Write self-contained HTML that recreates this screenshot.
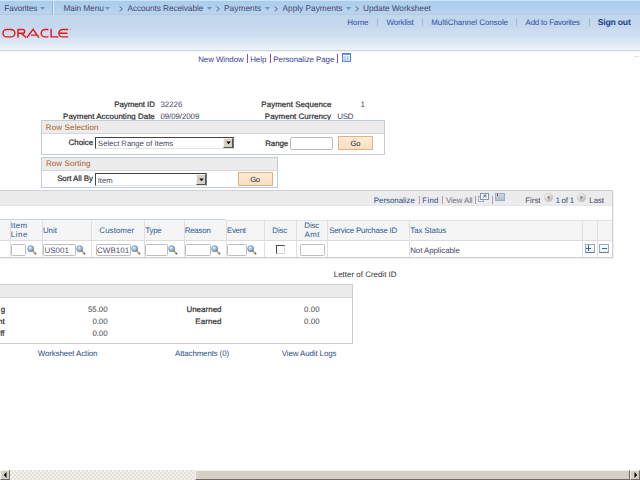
<!DOCTYPE html><html><head><meta charset="utf-8"><style>
html,body{margin:0;padding:0;width:640px;height:480px;overflow:hidden;background:#fff}
body{position:relative;font-family:"Liberation Sans",sans-serif}
.t{position:absolute;white-space:nowrap;line-height:1;font-family:"Liberation Sans",sans-serif;text-rendering:geometricPrecision}
.a{position:absolute}
</style></head><body>
<div class="a" style="left:0px;top:0px;width:640px;height:1px;background:#d3e2f1"></div>
<div class="a" style="left:0px;top:1px;width:640px;height:14px;background:linear-gradient(#aacdef,#bad3ec 13px,#b3cbe5 13px)"></div>
<div class="a" style="left:0px;top:15px;width:640px;height:35px;background:linear-gradient(#c2d6ec 0px,#c5d8ee 13px,#cadcef 14px,#d0e0f1 22px,#d8e5f4 24px,#dde8f5 29px,#e6eef8 30px,#edf2fa 35px)"></div>
<div class="a" style="left:0px;top:50px;width:640px;height:1px;background:#d0d6dc"></div>
<div class="a" style="left:0px;top:51px;width:640px;height:1px;background:#f0f2f4"></div>
<div class="a" style="left:52px;top:1px;width:1px;height:14px;background:#98b3d2"></div>
<div class="a" style="left:53px;top:1px;width:1px;height:14px;background:#e4eef8"></div>
<span class="t" style="left:4.24px;top:4px;font-size:8.3px;color:#45466c;letter-spacing:-0.132px;">Favorites</span>
<span class="t" style="left:63.44px;top:4px;font-size:8.3px;color:#45466c;letter-spacing:-0.086px;">Main Menu</span>
<span class="t" style="left:127.50px;top:4px;font-size:8.3px;color:#45466c;letter-spacing:-0.095px;">Accounts Receivable</span>
<span class="t" style="left:224.04px;top:4px;font-size:8.3px;color:#45466c;letter-spacing:0.037px;">Payments</span>
<span class="t" style="left:282.50px;top:4px;font-size:8.3px;color:#45466c;">Apply Payments</span>
<span class="t" style="left:363.08px;top:4px;font-size:8.3px;color:#45466c;letter-spacing:-0.060px;">Update Worksheet</span>
<svg class="a" style="left:39.9px;top:7px" width="6" height="4"><path d="M0 0 H5 L2.5 3 Z" fill="#6f95c8"/></svg>
<svg class="a" style="left:105.4px;top:7px" width="6" height="4"><path d="M0 0 H5 L2.5 3 Z" fill="#6f95c8"/></svg>
<svg class="a" style="left:206.6px;top:7px" width="6" height="4"><path d="M0 0 H5 L2.5 3 Z" fill="#6f95c8"/></svg>
<svg class="a" style="left:265.0px;top:7px" width="6" height="4"><path d="M0 0 H5 L2.5 3 Z" fill="#6f95c8"/></svg>
<svg class="a" style="left:346.2px;top:7px" width="6" height="4"><path d="M0 0 H5 L2.5 3 Z" fill="#6f95c8"/></svg>
<svg class="a" style="left:118.5px;top:6px" width="5" height="6"><path d="M0.6 0.6 L3.4 2.9 L0.6 5.2" fill="none" stroke="#555a70" stroke-width="0.9"/></svg>
<svg class="a" style="left:216px;top:6px" width="5" height="6"><path d="M0.6 0.6 L3.4 2.9 L0.6 5.2" fill="none" stroke="#555a70" stroke-width="0.9"/></svg>
<svg class="a" style="left:273.5px;top:6px" width="5" height="6"><path d="M0.6 0.6 L3.4 2.9 L0.6 5.2" fill="none" stroke="#555a70" stroke-width="0.9"/></svg>
<svg class="a" style="left:354.7px;top:6px" width="5" height="6"><path d="M0.6 0.6 L3.4 2.9 L0.6 5.2" fill="none" stroke="#555a70" stroke-width="0.9"/></svg>
<span class="t" style="left:347.16px;top:19px;font-size:8.0px;color:#31519a;">Home</span>
<span class="t" style="left:386.56px;top:19px;font-size:8.0px;color:#31519a;letter-spacing:-0.150px;">Worklist</span>
<span class="t" style="left:431.26px;top:19px;font-size:8.0px;color:#31519a;letter-spacing:-0.076px;">MultiChannel Console</span>
<span class="t" style="left:525.60px;top:19px;font-size:8.0px;color:#31519a;letter-spacing:-0.257px;">Add to Favorites</span>
<span class="t" style="left:597.64px;top:18px;font-size:8.6px;color:#1b3b86;font-weight:bold;letter-spacing:-0.173px;">Sign out</span>
<div class="a" style="left:377px;top:18px;width:1px;height:8px;background:#a3b9d3"></div>
<div class="a" style="left:422px;top:18px;width:1px;height:8px;background:#a3b9d3"></div>
<div class="a" style="left:516px;top:18px;width:1px;height:8px;background:#a3b9d3"></div>
<div class="a" style="left:589px;top:18px;width:1px;height:8px;background:#a3b9d3"></div>
<svg class="a" style="left:0;top:0" width="80" height="45"><g fill="none" stroke="#e6161e" stroke-width="1.45"><path d="M6.6 29.55 H11.2 A3.65 3.65 0 0 1 11.2 36.85 H6.6 A3.65 3.65 0 0 1 6.6 29.55 Z"/><path d="M18 37.6 V29.55 H22.8 A1.85 1.85 0 0 1 22.8 33.25 H18 M21.2 33.25 L25.9 37.4"/><path d="M26.9 37.6 L33.1 29.3 L38.9 37.6 M31 35.1 H36.6" stroke-linejoin="miter"/><path d="M48.4 29.55 H44.9 A3.65 3.65 0 0 0 44.9 36.85 H48.4"/><path d="M51.1 28.8 V36.85 H58.4"/><path d="M68.1 29.55 H62.5 A3.65 3.65 0 0 0 62.5 36.85 H68.1 M59.2 33.2 H67.4"/></g><circle cx="70.4" cy="29.4" r="0.7" fill="#f08080"/></svg>
<div class="a" style="left:634px;top:56px;width:5px;height:1px;background:#e2e2e2"></div>
<div class="a" style="left:634px;top:56px;width:1px;height:2px;background:#e8e8e8"></div>
<span class="t" style="left:198.17px;top:56px;font-size:7.9px;color:#3b4096;letter-spacing:-0.056px;">New Window</span>
<span class="t" style="left:250.17px;top:56px;font-size:7.9px;color:#3b4096;">Help</span>
<span class="t" style="left:273.37px;top:56px;font-size:7.9px;color:#3b4096;letter-spacing:-0.063px;">Personalize Page</span>
<div class="a" style="left:247px;top:54px;width:1px;height:9px;background:#9448b4"></div>
<div class="a" style="left:270px;top:54px;width:1px;height:9px;background:#9448b4"></div>
<div class="a" style="left:337px;top:54px;width:1px;height:9px;background:#9448b4"></div>
<svg class="a" style="left:342px;top:53px" width="9" height="9"><rect x="0.5" y="0.5" width="8" height="8" fill="#dce8f8" stroke="#5a8ad4"/><rect x="1" y="1" width="7" height="1.2" fill="#6e9ade"/><rect x="1" y="2.2" width="7" height="0.9" fill="#ffffff"/><rect x="2.6" y="3.2" width="0.8" height="5" fill="#8db0e6"/><rect x="5.4" y="3.2" width="0.8" height="5" fill="#8db0e6"/><rect x="1" y="3.2" width="1.5" height="5" fill="#c4d8f4"/></svg>
<span class="t" style="left:114.37px;top:101px;font-size:7.9px;color:#333;-webkit-text-stroke:0.24px #333;letter-spacing:-0.083px;">Payment ID</span>
<span class="t" style="left:160.43px;top:101px;font-size:7.9px;color:#45455a;letter-spacing:-0.020px;">32226</span>
<span class="t" style="left:261.37px;top:101px;font-size:7.9px;color:#333;-webkit-text-stroke:0.24px #333;letter-spacing:0.071px;">Payment Sequence</span>
<span class="t" style="left:360.61px;top:101px;font-size:7.9px;color:#45455a;">1</span>
<span class="t" style="left:63.12px;top:113px;font-size:7.9px;color:#333;-webkit-text-stroke:0.24px #333;letter-spacing:0.039px;">Payment Accounting Date</span>
<span class="t" style="left:160.43px;top:113px;font-size:7.9px;color:#45455a;letter-spacing:-0.069px;">09/09/2009</span>
<span class="t" style="left:264.87px;top:113px;font-size:7.9px;color:#333;-webkit-text-stroke:0.24px #333;letter-spacing:0.048px;">Payment Currency</span>
<span class="t" style="left:337.21px;top:113px;font-size:7.9px;color:#45455a;letter-spacing:-0.261px;">USD</span>
<div class="a" style="left:41px;top:120px;width:344px;height:35px;border:1px solid #c4ccd5;box-sizing:border-box;background:#fff"></div>
<div class="a" style="left:42px;top:121px;width:342px;height:13px;background:#ececec;border-bottom:1px solid #d4d8dc;box-sizing:border-box"></div>
<div class="a" style="left:41px;top:157px;width:237px;height:31px;border:1px solid #c4ccd5;box-sizing:border-box;background:#fff"></div>
<div class="a" style="left:42px;top:158px;width:235px;height:13px;background:#ececec;border-bottom:1px solid #d4d8dc;box-sizing:border-box"></div>
<span class="t" style="left:45.86px;top:124px;font-size:8.0px;color:#a65a26;letter-spacing:0.128px;">Row Selection</span>
<span class="t" style="left:45.96px;top:160px;font-size:8.0px;color:#a65a26;letter-spacing:0.090px;">Row Sorting</span>
<span class="t" style="left:68.61px;top:139px;font-size:7.9px;color:#333;-webkit-text-stroke:0.24px #333;letter-spacing:-0.014px;">Choice</span>
<span class="t" style="left:265.17px;top:140px;font-size:7.9px;color:#333;-webkit-text-stroke:0.24px #333;letter-spacing:-0.045px;">Range</span>
<span class="t" style="left:57.14px;top:175px;font-size:7.9px;color:#333;-webkit-text-stroke:0.24px #333;letter-spacing:-0.060px;">Sort All By</span>
<div class="a" style="left:95px;top:137px;width:139px;height:12px;box-sizing:border-box;border-top:1px solid #444;border-left:1px solid #444;border-right:1px solid #777;border-bottom:1px solid #e4e2dc;background:#fff"></div>
<div class="a" style="left:223px;top:138px;width:10px;height:10px;box-sizing:border-box;background:#d4d0c8;border-top:1px solid #f4f3ee;border-left:1px solid #f4f3ee;border-right:1px solid #555;border-bottom:1px solid #555"></div>
<svg class="a" style="left:225.5px;top:141.0px" width="6" height="4"><path d="M0.3 0.5 H4.7 L2.5 3.2 Z" fill="#000"/></svg>
<span class="t" style="left:98.05px;top:140px;font-size:7.7px;color:#4a4a62;letter-spacing:-0.028px;">Select Range of Items</span>
<div class="a" style="left:95px;top:173px;width:112px;height:13px;box-sizing:border-box;border-top:1px solid #444;border-left:1px solid #444;border-right:1px solid #777;border-bottom:1px solid #e4e2dc;background:#fff"></div>
<div class="a" style="left:196px;top:174px;width:10px;height:11px;box-sizing:border-box;background:#d4d0c8;border-top:1px solid #f4f3ee;border-left:1px solid #f4f3ee;border-right:1px solid #555;border-bottom:1px solid #555"></div>
<svg class="a" style="left:198.5px;top:177.5px" width="6" height="4"><path d="M0.3 0.5 H4.7 L2.5 3.2 Z" fill="#000"/></svg>
<span class="t" style="left:97.71px;top:177px;font-size:7.7px;color:#4a4a62;">Item</span>
<div class="a" style="left:290px;top:137px;width:43px;height:13px;box-sizing:border-box;border:1px solid #bcbcbc;border-radius:2px;background:#fff"></div>
<div class="a" style="left:338px;top:136px;width:35px;height:14px;box-sizing:border-box;border:1px solid #e4b088;background:linear-gradient(#fcebd5,#f6e0c2)"></div>
<span class="t" style="left:350.62px;top:140px;font-size:7.6px;color:#1a1a1a;letter-spacing:-0.262px;">Go</span>
<div class="a" style="left:238px;top:172px;width:35px;height:14px;box-sizing:border-box;border:1px solid #e4b088;background:linear-gradient(#fcebd5,#f6e0c2)"></div>
<span class="t" style="left:250.22px;top:176px;font-size:7.6px;color:#1a1a1a;letter-spacing:-0.262px;">Go</span>
<div class="a" style="left:-5px;top:190px;width:618px;height:68px;box-sizing:border-box;border:1px solid #cdd0d4;background:#fff"></div>
<div class="a" style="left:0px;top:258px;width:613px;height:1px;background:#ededed"></div>
<div class="a" style="left:613px;top:191px;width:1px;height:68px;background:#f0f0f0"></div>
<div class="a" style="left:0px;top:191px;width:612px;height:15px;background:#ececec;border-bottom:1px solid #e4e6e8;box-sizing:border-box"></div>
<span class="t" style="left:373.87px;top:197px;font-size:7.9px;color:#2d4f8c;letter-spacing:-0.029px;">Personalize</span>
<span class="t" style="left:422.37px;top:197px;font-size:7.9px;color:#2d4f8c;letter-spacing:0.260px;">Find</span>
<span class="t" style="left:445.96px;top:197px;font-size:7.9px;color:#6e6e7e;letter-spacing:-0.134px;">View All</span>
<div class="a" style="left:419px;top:196px;width:1px;height:8px;background:#cf8fb0"></div>
<div class="a" style="left:442px;top:196px;width:1px;height:8px;background:#cf8fb0"></div>
<div class="a" style="left:475px;top:196px;width:1px;height:8px;background:#cf8fb0"></div>
<div class="a" style="left:492px;top:196px;width:1px;height:8px;background:#cf8fb0"></div>
<div class="a" style="left:478px;top:196px;width:6px;height:6px;box-sizing:border-box;border:1px solid #a4abb3;background:#f2f2f2"></div>
<div class="a" style="left:480px;top:193px;width:9px;height:7px;box-sizing:border-box;border:1px solid #7397c4;background:#fff"></div>
<svg class="a" style="left:481px;top:194px" width="7" height="5"><path d="M1.6 4.2 L4.6 1.3 M2.6 1.2 H4.9 V3.4" fill="none" stroke="#3a4250" stroke-width="0.8"/></svg>
<div class="a" style="left:495px;top:193px;width:10px;height:8px;box-sizing:border-box;border:1px solid #86b2e6;background:linear-gradient(#d2d4d8,#b9bdc4)"></div>
<div class="a" style="left:496.8px;top:194px;width:1.599999999999966px;height:1.8000000000000114px;background:#e3121c"></div>
<span class="t" style="left:525.17px;top:197px;font-size:7.9px;color:#45466c;letter-spacing:0.011px;">First</span>
<span class="t" style="left:555.41px;top:197px;font-size:7.9px;color:#2d4f8c;letter-spacing:-0.200px;">1 of 1</span>
<span class="t" style="left:589.37px;top:197px;font-size:7.9px;color:#45466c;letter-spacing:-0.073px;">Last</span>
<svg class="a" style="left:543.5px;top:192.5px" width="9" height="9"><defs><linearGradient id="g548" x1="0" y1="0" x2="0.6" y2="1"><stop offset="0" stop-color="#ffffff"/><stop offset="1" stop-color="#bdbdbd"/></linearGradient></defs><circle cx="4.5" cy="4.5" r="4.2" fill="url(#g548)" stroke="#c2c2c2" stroke-width="0.6"/><path d="M5.5 2.6 L3.2 4.6 L5.5 6.6 Z" fill="#7a7a7a"/></svg>
<svg class="a" style="left:577.0px;top:192.5px" width="9" height="9"><defs><linearGradient id="g581" x1="0" y1="0" x2="0.6" y2="1"><stop offset="0" stop-color="#ffffff"/><stop offset="1" stop-color="#bdbdbd"/></linearGradient></defs><circle cx="4.5" cy="4.5" r="4.2" fill="url(#g581)" stroke="#c2c2c2" stroke-width="0.6"/><path d="M3.5 2.6 L5.8 4.6 L3.5 6.6 Z" fill="#7a7a7a"/></svg>
<div class="a" style="left:0px;top:220px;width:612px;height:20px;background:#f5f5f5"></div>
<div class="a" style="left:0px;top:219px;width:226px;height:1px;background:#c3d7ec"></div>
<div class="a" style="left:226px;top:220px;width:386px;height:1px;background:#e2e2e2"></div>
<div class="a" style="left:0px;top:240px;width:612px;height:1px;background:#dcdcdc"></div>
<div class="a" style="left:10px;top:220px;width:1px;height:37px;background:#e0e0e0"></div>
<div class="a" style="left:42px;top:220px;width:1px;height:37px;background:#e0e0e0"></div>
<div class="a" style="left:91px;top:220px;width:1px;height:37px;background:#e0e0e0"></div>
<div class="a" style="left:144px;top:220px;width:1px;height:37px;background:#e0e0e0"></div>
<div class="a" style="left:184px;top:220px;width:1px;height:37px;background:#e0e0e0"></div>
<div class="a" style="left:226px;top:220px;width:1px;height:37px;background:#e0e0e0"></div>
<div class="a" style="left:264px;top:220px;width:1px;height:37px;background:#e0e0e0"></div>
<div class="a" style="left:296px;top:220px;width:1px;height:37px;background:#e0e0e0"></div>
<div class="a" style="left:327px;top:220px;width:1px;height:37px;background:#e0e0e0"></div>
<div class="a" style="left:409px;top:220px;width:1px;height:37px;background:#e0e0e0"></div>
<div class="a" style="left:582px;top:220px;width:1px;height:37px;background:#e0e0e0"></div>
<div class="a" style="left:597px;top:220px;width:1px;height:37px;background:#e0e0e0"></div>
<span class="t" style="left:10.79px;top:222px;font-size:7.9px;color:#2f5893;letter-spacing:0.286px;">Item</span>
<span class="t" style="left:10.87px;top:231px;font-size:7.9px;color:#2f5893;letter-spacing:0.519px;">Line</span>
<span class="t" style="left:42.91px;top:227px;font-size:7.9px;color:#2f5893;">Unit</span>
<span class="t" style="left:99.36px;top:227px;font-size:7.9px;color:#2f5893;letter-spacing:0.079px;">Customer</span>
<span class="t" style="left:145.34px;top:227px;font-size:7.9px;color:#2f5893;letter-spacing:-0.230px;">Type</span>
<span class="t" style="left:184.67px;top:227px;font-size:7.9px;color:#2f5893;letter-spacing:-0.214px;">Reason</span>
<span class="t" style="left:226.97px;top:227px;font-size:7.9px;color:#2f5893;letter-spacing:-0.278px;">Event</span>
<span class="t" style="left:272.37px;top:227px;font-size:7.9px;color:#2f5893;letter-spacing:-0.179px;">Disc</span>
<span class="t" style="left:304.37px;top:222px;font-size:7.9px;color:#2f5893;letter-spacing:-0.179px;">Disc</span>
<span class="t" style="left:304.50px;top:231px;font-size:7.9px;color:#2f5893;letter-spacing:0.508px;">Amt</span>
<span class="t" style="left:329.14px;top:227px;font-size:7.9px;color:#2f5893;letter-spacing:-0.211px;">Service Purchase ID</span>
<span class="t" style="left:410.34px;top:227px;font-size:7.9px;color:#2f5893;letter-spacing:-0.107px;">Tax Status</span>
<div class="a" style="left:11px;top:244px;width:15px;height:12px;box-sizing:border-box;border:1px solid #bdbdbd;border-radius:1.5px;background:#fff"></div>
<svg class="a" style="left:26.5px;top:244.5px" width="11" height="11"><defs><radialGradient id="lg" cx="35%" cy="30%" r="75%"><stop offset="0" stop-color="#eef7ff"/><stop offset="1" stop-color="#4f8fdc"/></radialGradient></defs><path d="M5.7 5.9 L8.0 8.2" stroke="#e0a048" stroke-width="1.9" stroke-linecap="round"/><circle cx="8.5" cy="8.6" r="0.95" fill="#3f5f95"/><circle cx="3.7" cy="3.7" r="3.0" fill="url(#lg)" stroke="#6f7a86" stroke-width="0.7"/></svg>
<div class="a" style="left:43px;top:244px;width:33px;height:11.5px;box-sizing:border-box;border:1px solid #bdbdbd;border-radius:1.5px;background:#fff"></div>
<span class="t" style="left:44.40px;top:246.5px;font-size:8.0px;color:#544e6c;">US001</span>
<svg class="a" style="left:76px;top:244.5px" width="11" height="11"><defs><radialGradient id="lg" cx="35%" cy="30%" r="75%"><stop offset="0" stop-color="#eef7ff"/><stop offset="1" stop-color="#4f8fdc"/></radialGradient></defs><path d="M5.7 5.9 L8.0 8.2" stroke="#e0a048" stroke-width="1.9" stroke-linecap="round"/><circle cx="8.5" cy="8.6" r="0.95" fill="#3f5f95"/><circle cx="3.7" cy="3.7" r="3.0" fill="url(#lg)" stroke="#6f7a86" stroke-width="0.7"/></svg>
<div class="a" style="left:95.5px;top:244px;width:35.5px;height:12px;box-sizing:border-box;border:1px solid #bdbdbd;border-radius:1.5px;background:#fff"></div>
<span class="t" style="left:97.10px;top:247px;font-size:8.0px;color:#544e6c;">CWB101</span>
<svg class="a" style="left:131px;top:244.5px" width="11" height="11"><defs><radialGradient id="lg" cx="35%" cy="30%" r="75%"><stop offset="0" stop-color="#eef7ff"/><stop offset="1" stop-color="#4f8fdc"/></radialGradient></defs><path d="M5.7 5.9 L8.0 8.2" stroke="#e0a048" stroke-width="1.9" stroke-linecap="round"/><circle cx="8.5" cy="8.6" r="0.95" fill="#3f5f95"/><circle cx="3.7" cy="3.7" r="3.0" fill="url(#lg)" stroke="#6f7a86" stroke-width="0.7"/></svg>
<div class="a" style="left:145px;top:244px;width:23px;height:12px;box-sizing:border-box;border:1px solid #bdbdbd;border-radius:1.5px;background:#fff"></div>
<svg class="a" style="left:168px;top:244.5px" width="11" height="11"><defs><radialGradient id="lg" cx="35%" cy="30%" r="75%"><stop offset="0" stop-color="#eef7ff"/><stop offset="1" stop-color="#4f8fdc"/></radialGradient></defs><path d="M5.7 5.9 L8.0 8.2" stroke="#e0a048" stroke-width="1.9" stroke-linecap="round"/><circle cx="8.5" cy="8.6" r="0.95" fill="#3f5f95"/><circle cx="3.7" cy="3.7" r="3.0" fill="url(#lg)" stroke="#6f7a86" stroke-width="0.7"/></svg>
<div class="a" style="left:185px;top:244px;width:26px;height:12px;box-sizing:border-box;border:1px solid #bdbdbd;border-radius:1.5px;background:#fff"></div>
<svg class="a" style="left:211px;top:244.5px" width="11" height="11"><defs><radialGradient id="lg" cx="35%" cy="30%" r="75%"><stop offset="0" stop-color="#eef7ff"/><stop offset="1" stop-color="#4f8fdc"/></radialGradient></defs><path d="M5.7 5.9 L8.0 8.2" stroke="#e0a048" stroke-width="1.9" stroke-linecap="round"/><circle cx="8.5" cy="8.6" r="0.95" fill="#3f5f95"/><circle cx="3.7" cy="3.7" r="3.0" fill="url(#lg)" stroke="#6f7a86" stroke-width="0.7"/></svg>
<div class="a" style="left:227px;top:244px;width:20px;height:12px;box-sizing:border-box;border:1px solid #bdbdbd;border-radius:1.5px;background:#fff"></div>
<svg class="a" style="left:247px;top:244.5px" width="11" height="11"><defs><radialGradient id="lg" cx="35%" cy="30%" r="75%"><stop offset="0" stop-color="#eef7ff"/><stop offset="1" stop-color="#4f8fdc"/></radialGradient></defs><path d="M5.7 5.9 L8.0 8.2" stroke="#e0a048" stroke-width="1.9" stroke-linecap="round"/><circle cx="8.5" cy="8.6" r="0.95" fill="#3f5f95"/><circle cx="3.7" cy="3.7" r="3.0" fill="url(#lg)" stroke="#6f7a86" stroke-width="0.7"/></svg>
<div class="a" style="left:276px;top:245px;width:8.5px;height:8.5px;box-sizing:border-box;border-top:1.5px solid #4a4a4a;border-left:1.5px solid #4a4a4a;border-right:1px solid #d8d5cc;border-bottom:1px solid #d8d5cc;background:#fff"></div>
<div class="a" style="left:300px;top:244px;width:25px;height:12px;box-sizing:border-box;border:1px solid #bdbdbd;border-radius:1.5px;background:#fff"></div>
<span class="t" style="left:410.17px;top:247px;font-size:7.9px;color:#4b4b66;letter-spacing:-0.053px;">Not Applicable</span>
<div class="a" style="left:585px;top:244px;width:10px;height:9px;box-sizing:border-box;border:1px solid #97a9bf;border-bottom-color:#6c7c92;background:linear-gradient(#fbfcfd,#e9eef4)"></div>
<div class="a" style="left:586px;top:247.6px;width:5.399999999999977px;height:1.4000000000000057px;background:#2d6aa6"></div>
<div class="a" style="left:588px;top:245.2px;width:1.3999999999999773px;height:6.200000000000017px;background:#2d6aa6"></div>
<div class="a" style="left:599px;top:244px;width:10px;height:9px;box-sizing:border-box;border:1px solid #97a9bf;border-bottom-color:#6c7c92;background:linear-gradient(#fbfcfd,#e9eef4)"></div>
<div class="a" style="left:601.5px;top:247.6px;width:5.5px;height:1.4000000000000057px;background:#2d6aa6"></div>
<span class="t" style="left:333.77px;top:271px;font-size:7.9px;color:#333;letter-spacing:0.025px;">Letter of Credit ID</span>
<div class="a" style="left:-5px;top:284px;width:358px;height:60px;box-sizing:border-box;border:1px solid #c8ccd2;background:#fff"></div>
<div class="a" style="left:0px;top:285px;width:352px;height:13px;background:#ececec;border-bottom:1px solid #d6dadf;box-sizing:border-box"></div>
<span class="t" style="left:0.63px;top:306px;font-size:7.9px;color:#333;-webkit-text-stroke:0.24px #333;">g</span>
<span class="t" style="left:-1.92px;top:318px;font-size:7.9px;color:#333;-webkit-text-stroke:0.24px #333;">nt</span>
<span class="t" style="left:0.13px;top:330px;font-size:7.9px;color:#333;-webkit-text-stroke:0.24px #333;">ff</span>
<span class="t" style="left:87.98px;top:306px;font-size:7.9px;color:#444;letter-spacing:-0.039px;">55.00</span>
<span class="t" style="left:92.38px;top:318px;font-size:7.9px;color:#444;letter-spacing:-0.058px;">0.00</span>
<span class="t" style="left:92.38px;top:330px;font-size:7.9px;color:#444;letter-spacing:-0.058px;">0.00</span>
<span class="t" style="left:186.41px;top:306px;font-size:7.9px;color:#333;-webkit-text-stroke:0.24px #333;letter-spacing:0.061px;">Unearned</span>
<span class="t" style="left:195.37px;top:318px;font-size:7.9px;color:#333;-webkit-text-stroke:0.24px #333;letter-spacing:0.134px;">Earned</span>
<span class="t" style="left:304.08px;top:306px;font-size:7.9px;color:#444;letter-spacing:0.076px;">0.00</span>
<span class="t" style="left:304.08px;top:318px;font-size:7.9px;color:#444;letter-spacing:0.076px;">0.00</span>
<span class="t" style="left:37.86px;top:350px;font-size:7.9px;color:#2d4f8c;letter-spacing:-0.110px;">Worksheet Action</span>
<span class="t" style="left:175.00px;top:350px;font-size:7.9px;color:#2d4f8c;letter-spacing:-0.119px;">Attachments (0)</span>
<span class="t" style="left:281.86px;top:350px;font-size:7.9px;color:#2d4f8c;letter-spacing:-0.105px;">View Audit Logs</span>
<div class="a" style="left:0px;top:470px;width:640px;height:10px;background-color:#eceae5;background-image:repeating-conic-gradient(#e4e2dc 0 25%,#f1f0ec 0 50%);background-size:4px 4px"></div>
<div class="a" style="left:0px;top:470px;width:10px;height:10px;box-sizing:border-box;background:#d4d0c8;border-top:1px solid #f0efea;border-left:1px solid #f0efea;border-right:1px solid #6f6c66;border-bottom:1px solid #6f6c66"></div>
<svg class="a" style="left:2px;top:471px" width="6" height="8"><path d="M4.5 1 L1.8 4 L4.5 7 Z" fill="#000"/></svg>
<div class="a" style="left:195px;top:470px;width:435px;height:10px;box-sizing:border-box;background:#d4d0c8;border-top:1px solid #f2f0ec;border-left:1px solid #f2f0ec;border-right:1px solid #6f6c66;border-bottom:1px solid #6f6c66"></div>
<div class="a" style="left:630px;top:470px;width:10px;height:10px;box-sizing:border-box;background:#d4d0c8;border-top:1px solid #f0efea;border-left:1px solid #f0efea;border-right:1px solid #6f6c66;border-bottom:1px solid #6f6c66"></div>
<svg class="a" style="left:633px;top:471px" width="6" height="8"><path d="M1.5 1 L4.2 4 L1.5 7 Z" fill="#000"/></svg>
</body></html>
